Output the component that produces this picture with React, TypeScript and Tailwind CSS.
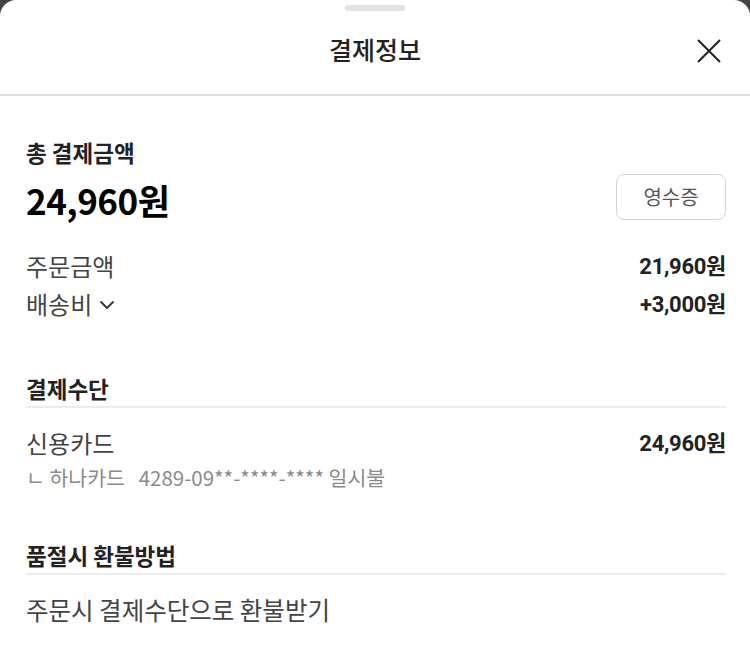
import { ChevronDown } from 'lucide-react';

const kr = { fontFamily: '"Noto Sans CJK KR", "Noto Sans", sans-serif' };
const num = { fontFamily: 'Roboto, "Noto Sans CJK KR", sans-serif' };

function Row({ label, value, chevron }: { label: string; value: string; chevron?: boolean }) {
  return (
    <div className="flex items-center justify-between h-[38px]">
      <div className="flex items-center gap-[3px] text-[24px] leading-[30px] text-[#444]">
        {label}
        {chevron && <ChevronDown size={24} strokeWidth={1.8} className="text-[#333] mt-[2px]" />}
      </div>
      <div className="text-[22px] font-bold text-[#222] tracking-[-0.3px]" style={num}>{value}</div>
    </div>
  );
}

export default function App() {
  return (
    <div className="w-[750px] h-[659px] bg-[#444444] overflow-hidden" style={kr}>
      <div className="bg-white rounded-t-[16px] h-full flex flex-col">
        <div className="flex justify-center pt-[5px]">
          <div className="w-[60px] h-[6px] rounded-full bg-[#e3e3e3]" />
        </div>
        <div className="relative h-[86px] flex items-center justify-center border-b-2 border-[#dedede] -mt-[1px]">
          <h1 className="text-[25px] leading-[30px] font-medium text-[#222] -mt-[6px]">결제정보</h1>
          <button className="absolute right-[29px] top-[29px] text-[#222]">
            <svg width="24" height="24" viewBox="0 0 24 24" fill="none" stroke="currentColor" strokeWidth="2">
              <path d="M1 1L23 23M23 1L1 23" />
            </svg>
          </button>
        </div>

        <div className="pl-[26px] pr-[24px]">
          <div className="pt-[41px] text-[22.5px] leading-[30px] font-bold text-[#222]">총 결제금액</div>
          <div className="flex items-center justify-between mt-[14px]">
            <div className="text-[35px] leading-[44px] font-bold text-black tracking-[-0.5px] -mt-[3px]">24,960원</div>
            <button className="w-[110px] h-[46px] border border-[#d4d4d4] rounded-[8px] text-[20px] text-[#555] -mt-[9px]">영수증</button>
          </div>
          <div className="mt-[25px]">
            <Row label="주문금액" value="21,960원" />
            <Row label="배송비" value="+3,000원" chevron />
          </div>

          <div className="mt-[50px] text-[22.5px] leading-[30px] font-bold text-[#222] pb-[3px] border-b-2 border-[#ececec]">결제수단</div>
          <div className="mt-[16px]">
            <Row label="신용카드" value="24,960원" />
            <div className="text-[20.5px] leading-[30px] text-[#8a8a8a]">
              ㄴ 하나카드&nbsp;&nbsp;&nbsp;4289-09**-****-**** 일시불
            </div>
          </div>

          <div className="mt-[48px] text-[22.5px] leading-[30px] font-bold text-[#222] pb-[3px] border-b-2 border-[#ececec]">품절시 환불방법</div>
          <div className="mt-[20px] text-[24.5px] leading-[30px] text-[#444]">주문시 결제수단으로 환불받기</div>
        </div>
      </div>
    </div>
  );
}
